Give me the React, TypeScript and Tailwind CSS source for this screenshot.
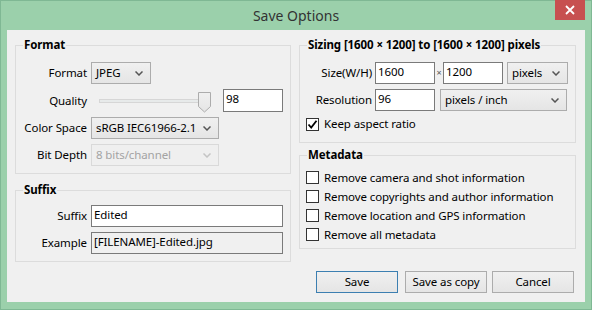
import React from "react";

const font = { fontFamily: '"Noto Sans", "Open Sans", sans-serif' };

function Chevron({ disabled }: { disabled?: boolean }) {
  return (
    <svg width="8" height="5" viewBox="0 0 8 5" className="shrink-0">
      <path
        d="M0.5 0.5 L4 4 L7.5 0.5"
        fill="none"
        stroke={disabled ? "#c4c4c4" : "#555"}
        strokeWidth="1.5"
      />
    </svg>
  );
}

function Select({ value, w, disabled }: { value: string; w: string; disabled?: boolean }) {
  return (
    <div
      className={`${w} h-[22px] flex items-center justify-between pl-[4px] pr-[7px] border ${
        disabled
          ? "border-[#d9d9d9] bg-[#efefef] text-[#a3a3a3]"
          : "border-[#acacac] bg-gradient-to-b from-[#f0f0f0] to-[#e5e5e5] text-black"
      }`}
    >
      <span className="leading-[16px] whitespace-nowrap">{value}</span>
      <Chevron disabled={disabled} />
    </div>
  );
}

function TextBox({ value, w, gray }: { value: string; w: string; gray?: boolean }) {
  return (
    <div
      className={`${w} h-[22px] border border-[#7a7a7a] px-[2px] leading-[17px] ${
        gray ? "bg-[#f0f0f0]" : "bg-white"
      }`}
    >
      {value}
    </div>
  );
}

function Check({ checked }: { checked?: boolean }) {
  return (
    <div className="w-[13px] h-[13px] border border-[#333] bg-white flex items-center justify-center shrink-0">
      {checked && (
        <svg width="11" height="11" viewBox="0 0 11 11">
          <path d="M1.5 5.5 L4.2 8.5 L9.5 1.8" fill="none" stroke="#000" strokeWidth="1.8" />
        </svg>
      )}
    </div>
  );
}

function Group({ title, className, children }: { title: string; className?: string; children: React.ReactNode }) {
  return (
    <fieldset className={`border border-[#dcdcdc] ${className ?? ""}`}>
      <legend className="ml-[7px] px-[1px] font-bold leading-[16px]">{title}</legend>
      {children}
    </fieldset>
  );
}

function Button({ label, primary }: { label: string; primary?: boolean }) {
  return (
    <div
      className={`w-[82px] h-[22px] flex items-center justify-center border bg-gradient-to-b from-[#f0f0f0] to-[#e5e5e5] ${
        primary ? "border-[#3c7fb1]" : "border-[#acacac]"
      }`}
    >
      {label}
    </div>
  );
}

function Slider() {
  return (
    <div className="w-[112px] h-[22px] flex items-center relative">
      <div className="w-[108px] h-[4px] bg-[#e7eaea] border border-[#d6d6d6]" />
      <svg width="13" height="21" viewBox="0 0 13 21" className="absolute left-[99px] top-[2px]">
        <defs>
          <linearGradient id="th" x1="0" y1="0" x2="0" y2="1">
            <stop offset="0" stopColor="#f0f0f0" />
            <stop offset="1" stopColor="#e5e5e5" />
          </linearGradient>
        </defs>
        <path d="M0.5 0.5 H12.5 V14.5 L6.5 20 L0.5 14.5 Z" fill="url(#th)" stroke="#acacac" />
      </svg>
    </div>
  );
}

export default function App() {
  return (
    <div
      style={font}
      className="w-[592px] h-[310px] bg-[#9bd0ab] border border-[#7fb894] flex flex-col text-[11.5px] tracking-[-0.1px] text-black"
    >
      {/* TITLE BAR */}
      <div className="h-[29px] grid grid-cols-[1fr_auto_1fr]">
        <div />
        <div className="text-[14px] tracking-normal text-[#333] leading-[30px]">Save Options</div>
        <div className="flex justify-end items-start pr-[6px]">
          <div className="w-[30px] h-[20px] -mt-[1px] bg-[#c75050] flex items-center justify-center">
            <svg width="10" height="10" viewBox="0 0 10 10">
              <path d="M1 1 L9 9 M9 1 L1 9" stroke="#fff" strokeWidth="1.8" />
            </svg>
          </div>
        </div>
      </div>

      {/* CLIENT */}
      <div className="mx-[6px] h-[272px] bg-[#f0f0f0] flex gap-[8px] pl-[8px] pr-[7px] pt-[7px] pb-[9px]">
        {/* LEFT */}
        <div className="w-[276px] flex flex-col">
          <Group title="Format" className="pb-[7px]">
            <div className="mt-[9px] flex flex-col gap-[5px]">
              <div className="flex items-center">
                <span className="w-[71px] text-right mr-[4px]">Format</span>
                <Select value="JPEG" w="w-[60px]" />
              </div>
              <div className="flex items-center">
                <span className="w-[71px] text-right mr-[12px]">Quality</span>
                <Slider />
                <div className="ml-[12px]">
                  <div className="w-[60px] h-[23px] border border-[#7a7a7a] bg-white px-[2px] leading-[17px]">98</div>
                </div>
              </div>
              <div className="flex items-center">
                <span className="w-[71px] text-right mr-[4px] whitespace-nowrap">Color Space</span>
                <Select value="sRGB IEC61966-2.1" w="w-[128px]" />
              </div>
              <div className="flex items-center">
                <span className="w-[71px] text-right mr-[4px]">Bit Depth</span>
                <Select value="8 bits/channel" w="w-[128px]" disabled />
              </div>
            </div>
          </Group>

          <Group title="Suffix" className="mt-[8px] pb-[7px]">
            <div className="mt-[7px] flex flex-col gap-[5px]">
              <div className="flex items-center">
                <span className="w-[71px] text-right mr-[4px]">Suffix</span>
                <TextBox value="Edited" w="w-[192px]" />
              </div>
              <div className="flex items-center">
                <span className="w-[71px] text-right mr-[4px]">Example</span>
                <TextBox value="[FILENAME]-Edited.jpg" w="w-[192px]" gray />
              </div>
            </div>
          </Group>
        </div>

        {/* RIGHT */}
        <div className="w-[277px] flex flex-col">
          <Group title="Sizing [1600 × 1200] to [1600 × 1200] pixels" className="pb-[10px]">
            <div className="mt-[9px] flex flex-col gap-[5px]">
              <div className="flex items-center">
                <span className="w-[72px] text-right mr-[3px]">Size(W/H)</span>
                <TextBox value="1600" w="w-[60px]" />
                <span className="w-[8px] text-center text-[9px] text-[#555]">×</span>
                <TextBox value="1200" w="w-[60px]" />
                <div className="ml-[4px]">
                  <Select value="pixels" w="w-[61px]" />
                </div>
              </div>
              <div className="flex items-center">
                <span className="w-[72px] text-right mr-[3px]">Resolution</span>
                <TextBox value="96" w="w-[60px]" />
                <div className="ml-[5px]">
                  <Select value="pixels / inch" w="w-[127px]" />
                </div>
              </div>
              <div className="flex items-center gap-[5px] pl-[6px] h-[16px]">
                <Check checked />
                <span>Keep aspect ratio</span>
              </div>
            </div>
          </Group>

          <Group title="Metadata" className="mt-[4px] pb-[4px]">
            <div className="mt-[5px] flex flex-col">
              {[
                "Remove camera and shot information",
                "Remove copyrights and author information",
                "Remove location and GPS information",
                "Remove all metadata",
              ].map((t) => (
                <div key={t} className="h-[19px] flex items-center gap-[5px] pl-[6px]">
                  <Check />
                  <span>{t}</span>
                </div>
              ))}
            </div>
          </Group>

          {/* BUTTONS */}
          <div className="mt-auto flex justify-end pr-[2px]">
            <Button label="Save" primary />
            <div className="ml-[7px]">
              <Button label="Save as copy" />
            </div>
            <div className="ml-[5px]">
              <Button label="Cancel" />
            </div>
          </div>
        </div>
      </div>
    </div>
  );
}
